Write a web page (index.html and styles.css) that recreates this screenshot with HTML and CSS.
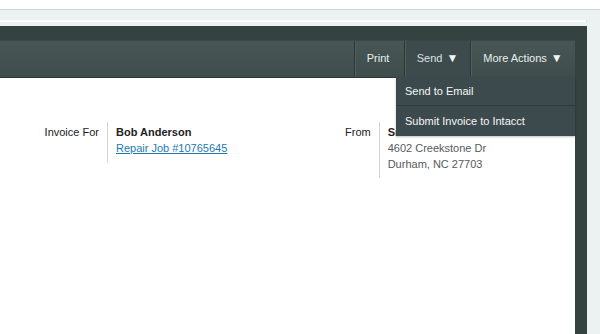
FILE: index.html
```html
<!DOCTYPE html>
<html>
<head>
<meta charset="utf-8">
<link rel="stylesheet" href="styles.css">
</head>
<body>
<div class="topbar"></div>
<div class="page">
  <div class="strip"></div>
  <div class="frame">
    <div class="toolbar">
      <div class="btn btn-print">Print</div>
      <div class="btn btn-send">Send <span class="caret">&#9660;</span></div>
      <div class="btn btn-more">More Actions <span class="caret">&#9660;</span></div>
    </div>
    <div class="content">
      <div class="group group-for">
        <div class="label label-for">Invoice For</div>
        <div class="value">
          <div class="name">Bob Anderson</div>
          <a class="link" href="#">Repair Job #10765645</a>
        </div>
      </div>
      <div class="group group-from">
        <div class="label">From</div>
        <div class="value value-from">
          <div class="name">Smith Services</div>
          <div class="addr">4602 Creekstone Dr</div>
          <div class="addr">Durham, NC 27703</div>
        </div>
      </div>
    </div>
    <div class="menu">
      <div class="menu-item">Send to Email</div>
      <div class="menu-item">Submit Invoice to Intacct</div>
    </div>
  </div>
</div>
</body>
</html>
```
FILE: styles.css
```css
html, body {
  margin: 0;
  padding: 0;
  height: 100%;
  overflow: hidden;
}
body {
  font-family: "Liberation Sans", Arial, sans-serif;
  font-size: 11px;
  background: #ecf1f1;
}
.topbar {
  height: 9px;
  background: #ffffff;
  border-bottom: 1px solid #cdd2d2;
}
.page {
  background: #ecf1f1;
  padding-top: 10px;
  height: 324px;
  box-sizing: border-box;
}
.strip {
  width: 586px;
  height: 2px;
  background: #fbfdfd;
  border-right: 1px solid #d4dcdc;
  margin-bottom: 4px;
}
.frame {
  position: relative;
  width: 575px;
  padding: 14px 12px 0 0;
  height: 308px;
  background: #344240;
}
.toolbar {
  height: 36px;
  display: flex;
  justify-content: flex-end;
  background: linear-gradient(#475755, #3f4d4b);
  border-top: 1px solid #3a4846;
  border-bottom: 1px solid #2c3836;
}
.btn {
  display: flex;
  align-items: center;
  justify-content: center;
  padding-bottom: 3px;
  color: #e8eef0;
  border-left: 1px solid #2c3836;
  box-shadow: inset 1px 0 0 #4f5f5d;
  box-sizing: border-box;
}
.btn-print { width: 50px; padding-right: 3px; }
.btn-send { width: 66px; background: #3e4b4d; color: #d9e2e6; }
.btn-more { width: 105px; }
.caret {
  font-size: 12px;
  margin-left: 4px;
  color: #f2f6f8;
}
.content {
  background: #ffffff;
  height: 257px;
  display: flex;
  padding-top: 44px;
  box-sizing: border-box;
  color: #222;
}
.group {
  display: flex;
  align-items: flex-start;
}
.group-for { width: 345px; }
.label {
  padding-right: 8px;
  padding-top: 4px;
  color: #222;
}
.label-for {
  width: 107px;
  text-align: right;
  box-sizing: border-box;
}
.value {
  border-left: 1px solid #d3d6d6;
  padding: 4px 0 7px 8px;
  line-height: 16px;
}
.value-from { padding-bottom: 6px; }
.name {
  font-weight: bold;
  line-height: 13px;
  margin-bottom: 1px;
}
.link {
  color: #1b7ab3;
  text-decoration: underline;
}
.addr {
  color: #555b5c;
}
.menu {
  position: absolute;
  left: 396px;
  top: 51px;
  width: 179px;
  background: #3d4a4d;
  box-shadow: 0 1px 2px rgba(0,0,0,0.25);
}
.menu-item {
  height: 28px;
  line-height: 28px;
  padding-left: 9px;
  color: #f4f7f8;
  border-bottom: 1px solid #2f3a3c;
}
.menu-item:last-child {
  height: 30px;
  line-height: 30px;
  border-bottom: none;
}
```
